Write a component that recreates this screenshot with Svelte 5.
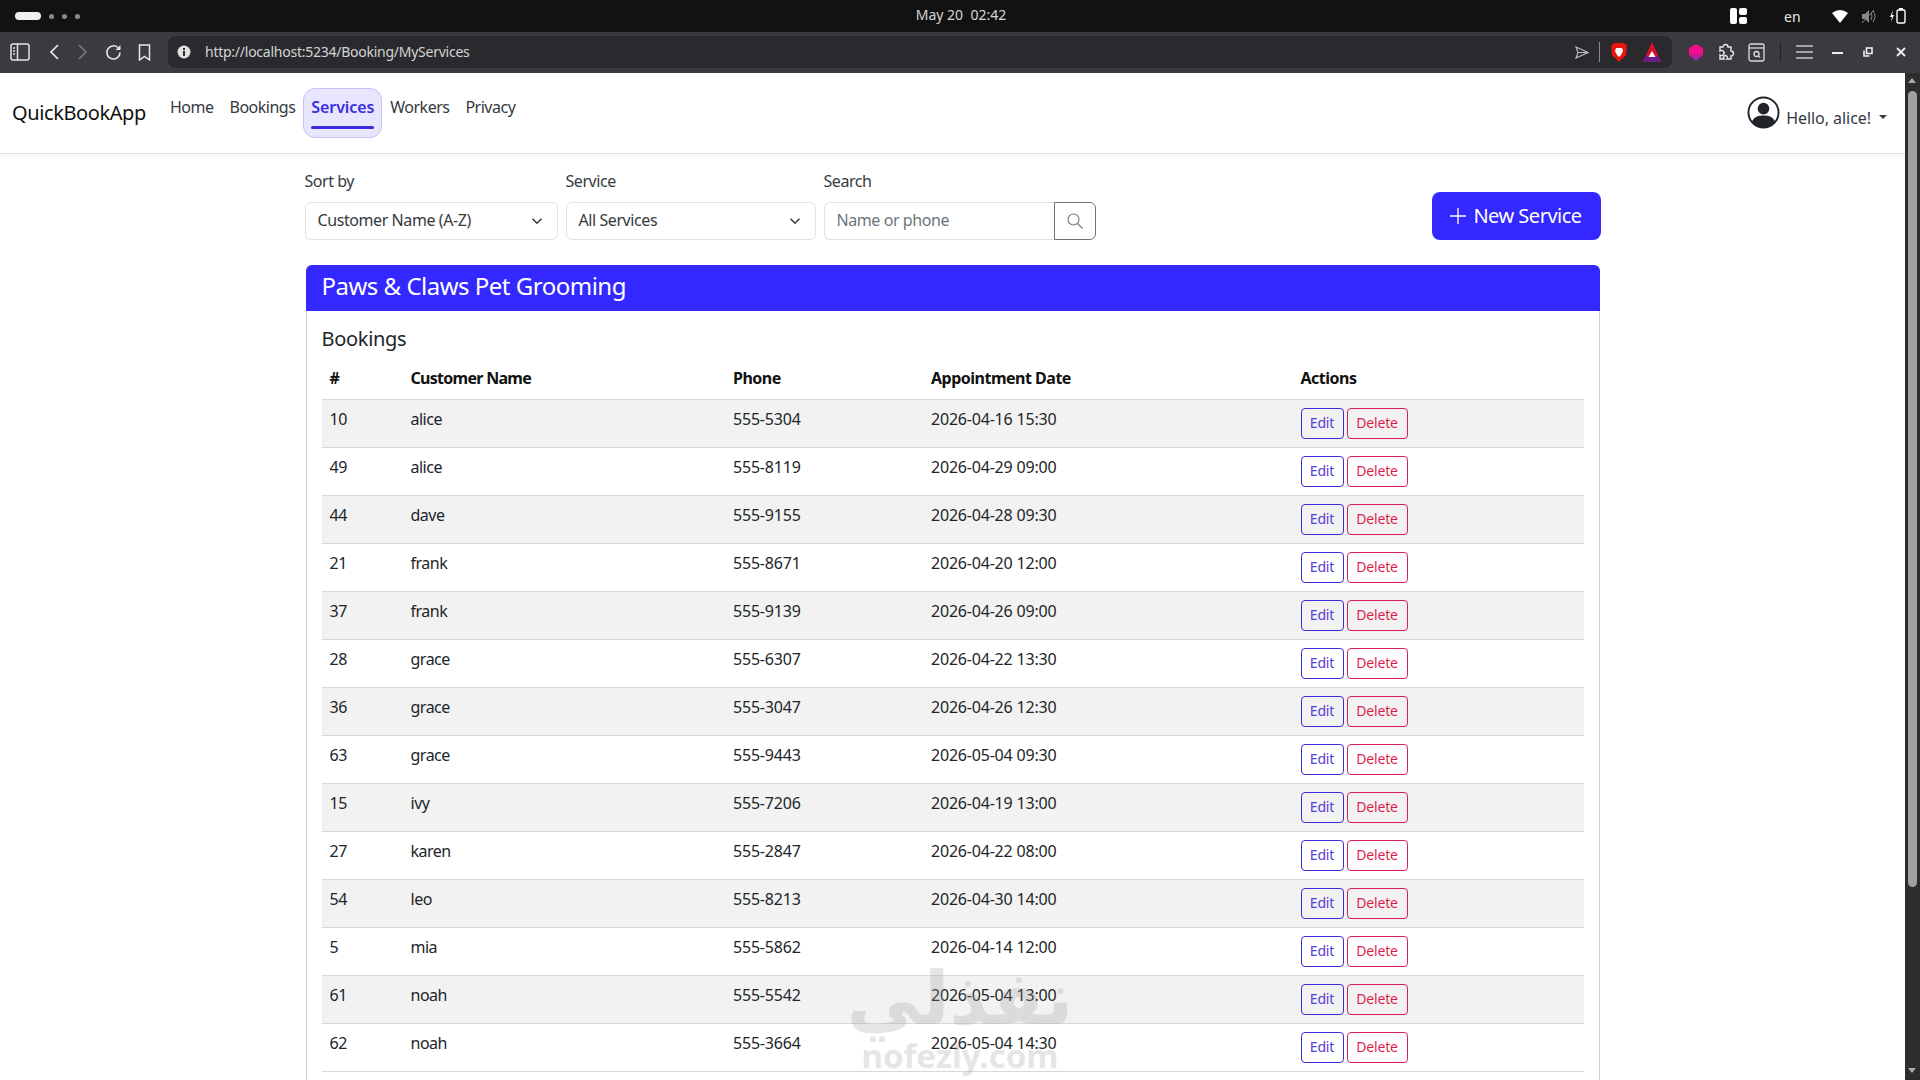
<script>
  const rows = [
    [10,'alice','555-5304','2026-04-16 15:30'],[49,'alice','555-8119','2026-04-29 09:00'],
    [44,'dave','555-9155','2026-04-28 09:30'],[21,'frank','555-8671','2026-04-20 12:00'],
    [37,'frank','555-9139','2026-04-26 09:00'],[28,'grace','555-6307','2026-04-22 13:30'],
    [36,'grace','555-3047','2026-04-26 12:30'],[63,'grace','555-9443','2026-05-04 09:30'],
    [15,'ivy','555-7206','2026-04-19 13:00'],[27,'karen','555-2847','2026-04-22 08:00'],
    [54,'leo','555-8213','2026-04-30 14:00'],[5,'mia','555-5862','2026-04-14 12:00'],
    [61,'noah','555-5542','2026-05-04 13:00'],[62,'noah','555-3664','2026-05-04 14:30']
  ];
</script>

<div class="screen">
  <div class="topbar">
    <div class="workspaces"><span class="pill"></span><span class="dot"></span><span class="dot"></span><span class="dot"></span></div>
    <div class="clock">May 20&nbsp; 02:42</div>
    <div class="tray">
      <svg width="17" height="16" viewBox="0 0 17 16"><rect x="0" y="0" width="7" height="16" rx="2" fill="#fff"/><rect x="9" y="0" width="8" height="7" rx="2" fill="#fff"/><rect x="9" y="9" width="8" height="7" rx="2" fill="#fff"/></svg>
      <span class="lang">en</span>
      <svg class="wifi" width="16" height="14" viewBox="0 0 16 14"><path d="M0 4Q8-2 16 4L8 14Z" fill="#fff"/></svg>
      <svg class="mute" width="15" height="15" viewBox="0 0 15 15"><path d="M1 5h3l4-4v13l-4-4H1z" fill="#888"/><path d="M10 4q2 3 0 7M12 2q4 5 0 11M1 14 13 1" stroke="#888" fill="none"/></svg>
      <svg class="batt" width="16" height="16" viewBox="0 0 16 16"><path d="M3 2 0 9h2l-1 5 3-7H2z" fill="#fff"/><rect x="7" y="2" width="8" height="13" rx="1.5" fill="none" stroke="#fff" stroke-width="1.4"/><rect x="9" y="0" width="4" height="2" fill="#fff"/></svg>
    </div>
  </div>

  <div class="toolbar">
    <div class="navicons">
      <svg width="20" height="18" viewBox="0 0 20 18" fill="none" stroke="#e4e4e4" stroke-width="1.5"><rect x="1" y="1" width="18" height="16" rx="2"/><path d="M7.5 1v16"/><path d="M3 5h2M3 8h2M3 11h2"/></svg>
      <svg class="back" width="10" height="16" viewBox="0 0 10 16" fill="none" stroke="#e8e8e8" stroke-width="1.7"><path d="M9 1 2 8l7 7"/></svg>
      <svg class="fwd" width="10" height="16" viewBox="0 0 10 16" fill="none" stroke="#77777b" stroke-width="1.7"><path d="m1 1 7 7-7 7"/></svg>
      <svg class="reload" width="17" height="17" viewBox="0 0 17 17" fill="none" stroke="#e8e8e8" stroke-width="1.6"><path d="M15 8.5A6.6 6.6 0 1 1 12.8 3.5"/><path d="M15.5 1v5h-5z" fill="#e8e8e8" stroke="none"/></svg>
      <svg class="mark" width="13" height="17" viewBox="0 0 13 17" fill="none" stroke="#e8e8e8" stroke-width="1.5"><path d="M1.5 1h10v15l-5-3.5-5 3.5z"/></svg>
    </div>
    <div class="urlbar">
      <svg width="14" height="14" viewBox="0 0 14 14"><circle cx="7" cy="7" r="6.5" fill="#e0e0e0"/><rect x="6" y="6" width="2" height="5" fill="#2b2b2f"/><rect x="6" y="3" width="2" height="2" fill="#2b2b2f"/></svg>
      <span class="url">http://localhost:5234/Booking/MyServices</span>
      <svg class="send" width="14" height="13" viewBox="0 0 14 13" fill="none" stroke="#bbb" stroke-width="1.2"><path d="m1 1 12 5.500L1 12l2-5.500zM3 6.500h10"/></svg>
      <span class="sep"></span>
      <svg class="lion" width="16" height="20" viewBox="0 0 16 20"><path d="M3 1h10l3 3-1 9-7 7-7-7-1-9z" fill="#e8150f"/><path d="M5 6h6l1 3-2 4-2 2-2-2-2-4z" fill="#fff"/></svg>
      <svg class="tri" width="18" height="20" viewBox="0 0 18 20"><path d="M9 0 18 20H0z" fill="#d8102e"/><path d="M0 20l3-6h12l3 6z" fill="#6d1a8a"/><path d="m9 9 3.500 6h-7z" fill="#fff"/></svg>
    </div>
    <div class="ext">
      <svg width="16" height="17" viewBox="0 0 16 17"><defs><linearGradient id="g" x1="0" y1="0" x2="0" y2="1"><stop offset=".5" stop-color="#f0108a"/><stop offset="1" stop-color="#7a2fb0"/></linearGradient></defs><path d="M8 0l7 4v7l-7 6-7-6V4z" fill="url(#g)"/></svg>
      <svg class="puzzle" width="18" height="18" viewBox="0 0 18 18" fill="none" stroke="#e8e8e8" stroke-width="1.4"><path d="M3 4h3a2.500 2.500 0 1 1 5 0h3v4a2.500 2.500 0 1 1 0 5v3h-4a2 2 0 1 0-3 0H3v-4a2.500 2.500 0 1 0 0-4z"/></svg>
      <svg class="shot" width="17" height="19" viewBox="0 0 17 19" fill="none" stroke="#ddd" stroke-width="1.3"><rect x="1" y="1" width="15" height="17" rx="2"/><path d="M1 5h15"/><circle cx="8.500" cy="11" r="2.500"/><path d="m10.500 13 1.500 1.500"/></svg>
      <span class="sep dark"></span>
      <svg class="menu" width="17" height="14" viewBox="0 0 17 14" stroke="#c8c8c8" stroke-width="1.6"><path d="M0 1h17M0 7h17M0 13h17"/></svg>
      <svg class="min" width="11" height="3" viewBox="0 0 11 3"><rect width="11" height="2" y="1" fill="#eee"/></svg>
      <svg class="max" width="10" height="10" viewBox="0 0 10 10" fill="none" stroke="#eee" stroke-width="1.600"><rect x="3.500" y="1" width="5.500" height="5.500"/><path d="M1 3.500V9h5.500"/></svg>
      <svg class="close" width="10" height="10" viewBox="0 0 10 10" stroke="#eee" stroke-width="1.800"><path d="m1 1 8 8M9 1 1 9"/></svg>
    </div>
  </div>

  <div class="viewport">
    <div class="page">
      <nav class="navbar">
        <a class="brand">QuickBookApp</a>
        <ul class="links">
          <li>Home</li>
          <li>Bookings</li>
          <li class="active">Services</li>
          <li>Workers</li>
          <li>Privacy</li>
        </ul>
        <div class="user">
          <svg width="33" height="33" viewBox="0 0 34 34"><circle cx="17" cy="17" r="15.500" fill="#fff" stroke="#212529" stroke-width="2"/><circle cx="17" cy="13" r="6" fill="#212529"/><path d="M5 27c2-6 7-7 12-7s10 1 12 7a15 15 0 0 1-24 0z" fill="#212529"/></svg>
          <span class="hello">Hello, alice!</span>
          <span class="caret"></span>
        </div>
      </nav>

      <main class="container">
        <div class="filters">
          <div class="field sort">
            <label>Sort by</label>
            <div class="control select">Customer Name (A-Z)<svg width="12" height="12" viewBox="0 0 16 16" fill="none" stroke="#343a40" stroke-width="2"><path d="m2 5 6 6 6-6"/></svg></div>
          </div>
          <div class="field svc">
            <label>Service</label>
            <div class="control select">All Services<svg width="12" height="12" viewBox="0 0 16 16" fill="none" stroke="#343a40" stroke-width="2"><path d="m2 5 6 6 6-6"/></svg></div>
          </div>
          <div class="field srch">
            <label>Search</label>
            <div class="group">
              <div class="control input">Name or phone</div>
              <div class="searchbtn"><svg width="16" height="16" viewBox="0 0 16 16" fill="none" stroke="#6c757d" stroke-width="1.100"><circle cx="6.500" cy="6.500" r="5.500"/><path d="m10.500 10.500 5 5"/></svg></div>
            </div>
          </div>
          <button class="newbtn"><svg width="16" height="16" viewBox="0 0 16 16" stroke="#fff" stroke-width="1.300"><path d="M8 0v16M0 8h16"/></svg>New Service</button>
        </div>

        <section class="card">
          <header class="card-head">Paws &amp; Claws Pet Grooming</header>
          <div class="card-body">
            <h5>Bookings</h5>
            <table>
              <thead><tr><th class="c1">#</th><th class="c2">Customer Name</th><th class="c3">Phone</th><th class="c4">Appointment Date</th><th>Actions</th></tr></thead>
              <tbody>
                {#each rows as r}
                  <tr>
                    <td>{r[0]}</td><td>{r[1]}</td><td class="num">{r[2]}</td><td class="num">{r[3]}</td>
                    <td class="act"><button class="edit">Edit</button><button class="del">Delete</button></td>
                  </tr>
                {/each}
              </tbody>
            </table>
          </div>
        </section>
      </main>
      <div class="watermark"><div class="ar" dir="rtl">نفذلي</div><div class="en">nofezly.com</div></div>
    </div>
    <div class="scrollbar">
      <span class="up"></span>
      <div class="thumb"></div>
      <span class="down"></span>
    </div>
  </div>
</div>

<style>
  :global(body) { margin: 0; overflow: hidden; background: #fff; }
  .screen { width: 1920px; height: 1080px; display: flex; flex-direction: column; overflow: hidden; font-family: "Noto Sans", "Liberation Sans", sans-serif; color: #212529; font-size: 16px; letter-spacing: -0.5px; }

  .topbar { height: 32px; background: #121212; display: flex; align-items: center; position: relative; padding: 0 15px; flex: none; }
  .workspaces { display: flex; align-items: center; gap: 8px; }
  .pill { width: 26px; height: 8px; border-radius: 4px; background: #f0f0f0; }
  .dot { width: 5px; height: 5px; border-radius: 50%; background: #8a8a8a; }
  .clock { position: absolute; left: 2px; right: 0; top: 0; line-height: 30px; text-align: center; color: #d6d6d6; font-size: 14px; letter-spacing: 0; }
  .tray { margin-left: auto; display: flex; align-items: center; color: #e6e6e6; font-size: 14px; letter-spacing: 0; }
  .lang { margin-left: 37.5px; width: 16px; }
  .wifi { margin-left: 32px; }
  .mute { margin-left: 12.5px; }
  .batt { margin-left: 14.5px; margin-right: -1px; }

  .toolbar { height: 41px; box-sizing: border-box; padding: 0 0 1px 10px; background: #3b3b3f; display: flex; align-items: center; flex: none; }
  .navicons { display: flex; align-items: center; width: 158px; flex: none; }
  .back { margin-left: 19px; }
  .fwd { margin-left: 19px; }
  .reload { margin-left: 17px; }
  .mark { margin-left: 16px; }
  .urlbar { width: 1504px; height: 32px; background: #2a2a2e; border-radius: 8px; display: flex; align-items: center; padding: 0 11px 0 9px; box-sizing: border-box; flex: none; }
  .url { color: #d4d4d4; font-size: 14px; margin: 0 0 2px 14px; letter-spacing: -0.25px; }
  .send { margin-left: auto; }
  .sep { width: 1px; height: 20px; background: #8a8a8a; margin: 0 11px 0 10px; }
  .sep.dark { background: #222; margin: 0 14.5px 0 15.500px; }
  .tri { margin-left: 16px; }
  .ext { display: flex; align-items: center; margin-left: 16px; }
  .puzzle { margin-left: 13px; }
  .shot { margin-left: 12.5px; }
  .min { margin-left: 19px; }
  .max { margin-left: 20.5px; }
  .close { margin-left: 23px; }

  .viewport { flex: 1; display: flex; min-height: 0; }
  .page { flex: 1; position: relative; min-width: 0; overflow: hidden; }
  .scrollbar { width: 15px; background: #2d2d2d; position: relative; flex: none; }
  .thumb { position: absolute; left: 3px; width: 9px; top: 18px; height: 796px; background: #a0a0a0; border-radius: 5px; }
  .up, .down { position: absolute; left: 3px; width: 0; height: 0; border: 4.500px solid transparent; }
  .up { top: 1px; border-bottom: 5px solid #aaa; }
  .down { bottom: 3px; border-top: 5px solid #aaa; }

  .navbar { height: 81px; box-sizing: border-box; border-bottom: 1px solid #dee2e6; box-shadow: 0 1px 4px rgba(0,0,0,.05); display: flex; align-items: flex-start; padding: 0 12px; }
  .brand { font-size: 20px; color: #111; margin-top: 28px; line-height: 24px; width: 150px; flex: none; letter-spacing: -0.4px; }
  .links { list-style: none; margin: 15px 0 0; padding: 0; display: flex; }
  .links li { box-sizing: border-box; height: 50px; padding: 6px 7px; line-height: 24px; border: 1px solid transparent; border-radius: 12px; color: #343a40; position: relative; }
  .links li.active { background: #e8e5ff; border-color: #c6c0f5; color: #3a2de0; font-weight: 600; letter-spacing: -0.1px; }
  .links li.active::after { content: ""; position: absolute; left: 7px; right: 7px; bottom: 8px; height: 3px; border-radius: 2px; background: #3a2de0; }
  .user { margin-left: auto; display: flex; align-items: center; margin-top: 23px; margin-right: 6px; }
  .hello { margin-left: 6px; margin-top: 10px; color: #343a40; letter-spacing: -0.05px; }
  .caret { margin-left: 8px; margin-top: 8px; border: 4.500px solid transparent; border-top-color: #343a40; border-bottom: 0; }

  .container { width: 1320px; box-sizing: border-box; padding: 0 12px; margin: 0 auto; }
  .filters { display: flex; align-items: flex-end; margin-top: 38px; height: 48px; position: relative; }
  .field { display: flex; flex-direction: column; position: relative; }
  .field label { position: absolute; top: -33px; left: 0; line-height: 24px; font-size: 16px; letter-spacing: -0.45px; color: #343a40; }
  .sort { width: 253px; margin-right: 8px; }
  .svc { width: 250px; margin-right: 8px; }
  .srch { width: 272px; }
  .control { height: 38px; box-sizing: border-box; border: 1px solid #dee2e6; border-radius: 6px; padding: 0 12px 2px; display: flex; align-items: center; justify-content: space-between; color: #343a40; font-size: 16px; letter-spacing: -0.42px; background: #fff; }
  .select svg { margin-right: 2px; margin-top: 2px; }
  .group { display: flex; }
  .input { flex: 1; border-radius: 6px 0 0 6px; border-right: 0; color: #6c757d; }
  .searchbtn { width: 42px; height: 38px; box-sizing: border-box; border: 1px solid #6c757d; border-radius: 0 6px 6px 0; display: flex; align-items: center; justify-content: center; }
  .newbtn { margin-left: auto; height: 48px; width: 169px; background: #3328ff; color: #fff; border: 0; border-radius: 8px; font: inherit; font-size: 20px; letter-spacing: -0.5px; display: flex; align-items: center; justify-content: center; gap: 7px; padding: 0 0 2px; }
  .newbtn svg { margin-top: 2px; }

  .card { margin: 25px 1px 0; border: 1px solid #cfd2d6; border-bottom: 0; border-radius: 6px 6px 0 0; height: 900px; }
  .card-head { background: #3328ff; color: #fff; font-size: 24px; line-height: 41px; height: 46px; padding: 0 16px; margin: -1px -1px 0; border-radius: 6px 6px 0 0; letter-spacing: -0.5px; }
  .card-body { padding: 16px 15px; }
  h5 { margin: 0 0 8px; font-size: 20px; font-weight: 400; line-height: 24px; color: #212529; letter-spacing: -0.3px; }
  table { width: 100%; border-collapse: collapse; table-layout: fixed; }
  th { text-align: left; font-weight: 700; height: 40px; padding: 0 8px 1px; color: #111; box-sizing: border-box; border-bottom: 1px solid #d6d8da; }
  .c2 { letter-spacing: -0.72px; }
  .c1 { width: 81px; } .c2 { width: 322.5px; } .c3 { width: 198px; } .c4 { width: 369.5px; }
  td { height: 48px; padding: 7px 8px 8px; vertical-align: top; box-sizing: border-box; border-bottom: 1px solid #d6d8da; line-height: 24px; color: #212529; }
  td.num { letter-spacing: -0.2px; }
  tbody tr:nth-child(odd) td { background: #f2f2f2; }
  td.act { padding-top: 8px; line-height: 0; }
  button { cursor: pointer; }
  .edit, .del { font: inherit; font-size: 14px; line-height: 21px; height: 31px; box-sizing: border-box; background: transparent; border-radius: 4px; padding: 0 0 2px; letter-spacing: -0.2px; vertical-align: top; }
  .edit { width: 43px; border: 1px solid #3a2de0; color: #5540d8; }
  .del { width: 61px; margin-left: 3px; border: 1px solid #dc1f50; color: #dc1f50; }

  .watermark { position: absolute; left: 840px; top: 880px; width: 240px; text-align: center; color: #999; opacity: .25; pointer-events: none; letter-spacing: 0; }
  .ar { font-family: "DejaVu Sans", sans-serif; font-weight: 700; font-size: 74px; line-height: 90px; }
  .en { font-family: "Noto Sans", sans-serif; font-weight: 700; font-size: 33px; line-height: 36px; margin-top: -5px; }
</style>
